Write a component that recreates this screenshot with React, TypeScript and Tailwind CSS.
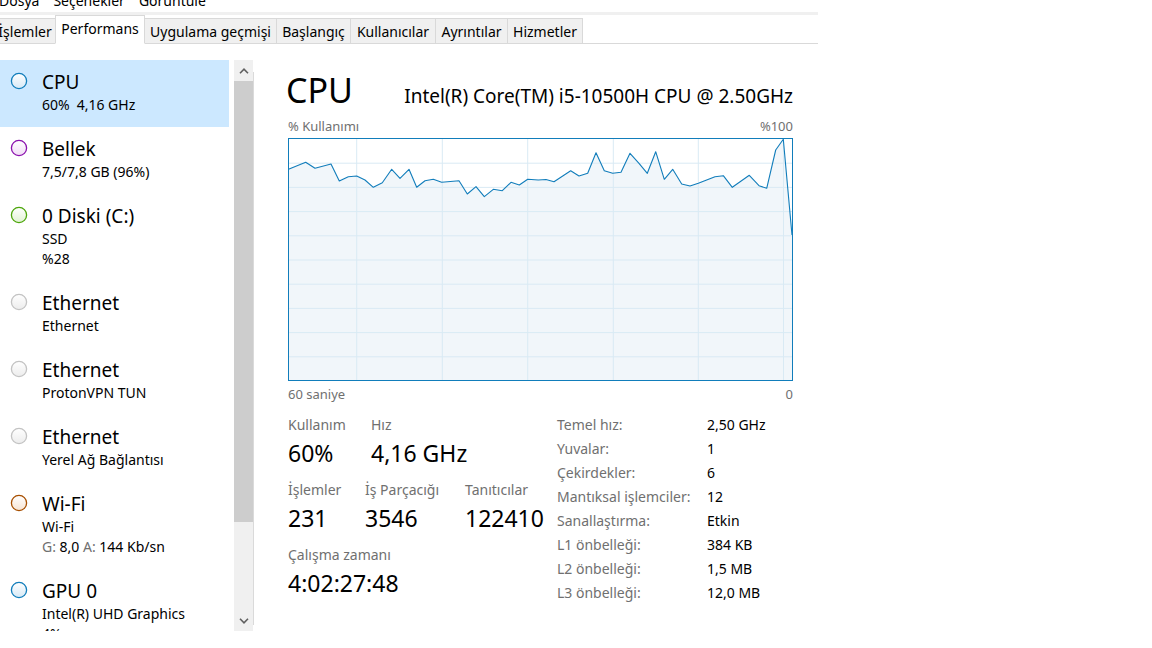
import React from 'react';

const F = "font-['Segoe_UI','Noto_Sans',sans-serif]";

type Item = {
  title: string;
  lines: React.ReactNode[];
  stroke: string;
  tint: string;
  id: string;
  selected?: boolean;
};

const GRAY = { stroke: '#c3c3c3', tint: '#ececec' };

const items: Item[] = [
  {
    id: 'cpu',
    title: 'CPU',
    lines: [
      <span key="a">
        60%<span className="ml-[7px]">4,16 GHz</span>
      </span>,
    ],
    stroke: '#117dbb',
    tint: '#d6e9f6',
    selected: true,
  },
  { id: 'mem', title: 'Bellek', lines: ['7,5/7,8 GB (96%)'], stroke: '#8b12ae', tint: '#f1dcf6' },
  { id: 'disk', title: '0 Diski (C:)', lines: ['SSD', '%28'], stroke: '#4da60c', tint: '#e1f2d3' },
  { id: 'e1', title: 'Ethernet', lines: ['Ethernet'], ...GRAY },
  { id: 'e2', title: 'Ethernet', lines: ['ProtonVPN TUN'], ...GRAY },
  { id: 'e3', title: 'Ethernet', lines: ['Yerel Ağ Bağlantısı'], ...GRAY },
  {
    id: 'wifi',
    title: 'Wi-Fi',
    lines: [
      'Wi-Fi',
      <span key="b">
        <span className="text-[#707070]">G:</span> 8,0 <span className="text-[#707070]">A:</span> 144 Kb/sn
      </span>,
    ],
    stroke: '#a74f01',
    tint: '#f7e4d3',
  },
  { id: 'gpu', title: 'GPU 0', lines: ['Intel(R) UHD Graphics', '4%'], stroke: '#117dbb', tint: '#d6e9f6' },
];

function Dot({ stroke, tint, id }: { stroke: string; tint: string; id: string }) {
  return (
    <svg width="18" height="18" viewBox="0 0 18 18" className="block">
      <defs>
        <linearGradient id={`g-${id}`} x1="0" y1="0" x2="0" y2="1">
          <stop offset="0" stopColor="#ffffff" />
          <stop offset="1" stopColor={tint} />
        </linearGradient>
      </defs>
      <circle cx="9" cy="9" r="7.6" fill={`url(#g-${id})`} stroke={stroke} strokeWidth="1.3" />
    </svg>
  );
}

const tabs = [
  { label: 'İşlemler', w: 62 },
  { label: 'Performans', w: 90, active: true },
  { label: 'Uygulama geçmişi', w: 133 },
  { label: 'Başlangıç', w: 75 },
  { label: 'Kullanıcılar', w: 86 },
  { label: 'Ayrıntılar', w: 73 },
  { label: 'Hizmetler', w: 76 },
];

const pts: [number, number][] = [
  [0.5, 31.3], [17.7, 24.3], [27, 30.3], [43, 26], [51.3, 43], [60.3, 38.7], [68.7, 38], [77, 42],
  [85.3, 49.3], [94.3, 44.7], [103.7, 31.3], [112, 40.3], [121, 31.3], [128.7, 49.3], [137, 42.7],
  [145.3, 41.3], [153.7, 44.3], [171, 42.7], [179.3, 56], [188, 48.7], [196.3, 58.7], [205.3, 51.3],
  [214.3, 52.7], [223, 44.3], [231.3, 47], [239.7, 41.3], [250.3, 42], [258, 41.5], [266, 43.7],
  [282.7, 32.7], [291, 38], [299.7, 35.3], [308, 14.7], [316.3, 32.7], [324.7, 35.3], [333, 34.3],
  [342, 15.3], [351, 25.3], [359.3, 35.3], [367.7, 13.7], [376.3, 41.3], [384.7, 31.3], [393.7, 46],
  [402, 48], [410.3, 45.3], [427, 38.7], [435.3, 37.7], [444.3, 49.3], [461.3, 37.3], [471, 47.7],
  [478.7, 50.3], [487.7, 12], [495.3, 1.3], [504, 97],
];

function Graph() {
  const line = pts.map((p) => p.join(',')).join(' ');
  const poly = `${line} 504,242 0.5,242`;
  const vx = [68.7, 154.3, 239.7, 325.3, 410.3, 495.5];
  const hy = [1, 2, 3, 4, 5, 6, 7, 8, 9].map((k) => 1 + 24.2 * k);
  return (
    <svg width="505" height="243" viewBox="0 0 505 243" className="block">
      <rect x="0" y="0" width="505" height="243" fill="#ffffff" />
      <polygon points={poly} fill="#f1f6fa" />
      {vx.map((x) => (
        <line key={`v${x}`} x1={x} y1={0} x2={x} y2={243} stroke="#d9eaf4" strokeWidth="1" />
      ))}
      {hy.map((y) => (
        <line key={`h${y}`} x1={0} y1={y} x2={505} y2={y} stroke="#d9eaf4" strokeWidth="1" />
      ))}
      <polyline points={line} fill="none" stroke="#117dbb" strokeWidth="1.1" strokeLinejoin="round" />
      <rect x="0.5" y="0.5" width="504" height="242" fill="none" stroke="#117dbb" strokeWidth="1" />
    </svg>
  );
}

function Chevron({ up }: { up?: boolean }) {
  return (
    <svg width="10" height="6" viewBox="0 0 10 6" className="block">
      <path d={up ? 'M1 5.2 L5 1.2 L9 5.2' : 'M1 0.8 L5 4.8 L9 0.8'} fill="none" stroke="#606060" strokeWidth="1.6" />
    </svg>
  );
}

const specs: [string, string][] = [
  ['Temel hız:', '2,50 GHz'],
  ['Yuvalar:', '1'],
  ['Çekirdekler:', '6'],
  ['Mantıksal işlemciler:', '12'],
  ['Sanallaştırma:', 'Etkin'],
  ['L1 önbelleği:', '384 KB'],
  ['L2 önbelleği:', '1,5 MB'],
  ['L3 önbelleği:', '12,0 MB'],
];

function Stat({ label, value, w }: { label: string; value: string; w: number }) {
  return (
    <div style={{ width: w }} className="shrink-0">
      <div className="text-[14px] leading-[20px] text-[#707070] whitespace-nowrap">{label}</div>
      <div className="mt-[2px] text-[23px] leading-[32px] text-black whitespace-nowrap">{value}</div>
    </div>
  );
}

export default function App() {
  return (
    <div className={`w-[1152px] h-[648px] bg-white overflow-hidden text-black ${F}`}>
      {/* menu bar */}
      <div className="h-[12px] w-[818px] overflow-hidden">
        <div className="flex text-[14px] leading-[20px] mt-[-9px] whitespace-nowrap">
          <span className="ml-[-1px]">Dosya</span>
          <span className="ml-[14px]">Seçenekler</span>
          <span className="ml-[14px]">Görüntüle</span>
        </div>
      </div>
      <div className="h-[3px] w-[818px] bg-[#f0f0f0]" />
      <div className="h-px" />
      {/* tabs */}
      <div className="flex items-end h-[28px] w-[818px] border-b border-[#d9d9d9]">
        {tabs.map((t, i) => (
          <div
            key={t.label}
            style={{ width: t.w }}
            className={`shrink-0 -mb-px flex items-center justify-center text-[14px] whitespace-nowrap border-x border-t border-[#d9d9d9] ${
              i === 0 ? 'ml-[-6px]' : 'ml-[-1px]'
            } ${t.active ? 'h-[29px] bg-white border-b border-b-white relative z-10 pb-[2px]' : 'h-[26px] bg-[#f0f0f0] border-b'}`}
          >
            {t.label}
          </div>
        ))}
      </div>

      {/* main */}
      <div className="flex mt-[16px]">
        {/* sidebar */}
        <div className="w-[229px] h-[571px] overflow-hidden shrink-0">
          {items.map((it) => (
            <div key={it.id} className={`flex pt-[10px] pb-[12px] ${it.selected ? 'bg-[#cce8ff]' : ''}`}>
              <div className="ml-[10px] mt-[2px] shrink-0">
                <Dot stroke={it.stroke} tint={it.tint} id={it.id} />
              </div>
              <div className="ml-[14px]">
                <div className="text-[19px] leading-[25px] whitespace-nowrap">{it.title}</div>
                {it.lines.map((l, i) => (
                  <div key={i} className="text-[14px] leading-[20px] whitespace-nowrap">
                    {l}
                  </div>
                ))}
              </div>
            </div>
          ))}
        </div>
        {/* scrollbar */}
        <div className="ml-[5px] w-[19px] h-[571px] bg-[#f0f0f0] flex flex-col shrink-0">
          <div className="h-[21px] flex items-center justify-center">
            <Chevron up />
          </div>
          <div className="h-[441px] bg-[#cdcdcd]" />
          <div className="flex-1" />
          <div className="h-[20px] flex items-center justify-center">
            <Chevron />
          </div>
        </div>
        <div className="w-px bg-[#dadada] mt-[12px] h-[553px] shrink-0" />

        {/* content */}
        <div className="ml-[34px] w-[505px] shrink-0">
          <div className="mt-[10px] h-[40px] flex justify-between items-baseline whitespace-nowrap">
            <span className="text-[34px] leading-[40px] ml-[-2px]">CPU</span>
            <span className="text-[19px] leading-[40px]">Intel(R) Core(TM) i5-10500H CPU @ 2.50GHz</span>
          </div>
          <div className="mt-[7px] flex justify-between text-[13px] leading-[18px] text-[#707070]">
            <span>% Kullanımı</span>
            <span>%100</span>
          </div>
          <div className="mt-[3px]">
            <Graph />
          </div>
          <div className="mt-[4px] flex justify-between text-[13px] leading-[18px] text-[#707070]">
            <span>60 saniye</span>
            <span>0</span>
          </div>

          <div className="mt-[9px] flex">
            <div className="w-[269px] shrink-0 pt-[3px]">
              <div className="flex">
                <Stat label="Kullanım" value="60%" w={83} />
                <Stat label="Hız" value="4,16 GHz" w={150} />
              </div>
              <div className="flex mt-[11px]">
                <Stat label="İşlemler" value="231" w={77} />
                <Stat label="İş Parçacığı" value="3546" w={100} />
                <Stat label="Tanıtıcılar" value="122410" w={90} />
              </div>
              <div className="flex mt-[11px]">
                <Stat label="Çalışma zamanı" value="4:02:27:48" w={200} />
              </div>
            </div>
            <div className="pt-[1px] grid grid-cols-[150px_auto] text-[14px] leading-[24px] whitespace-nowrap">
              {specs.map(([k, v]) => (
                <React.Fragment key={k}>
                  <div className="text-[#707070]">{k}</div>
                  <div className="text-black">{v}</div>
                </React.Fragment>
              ))}
            </div>
          </div>
        </div>
      </div>
    </div>
  );
}
